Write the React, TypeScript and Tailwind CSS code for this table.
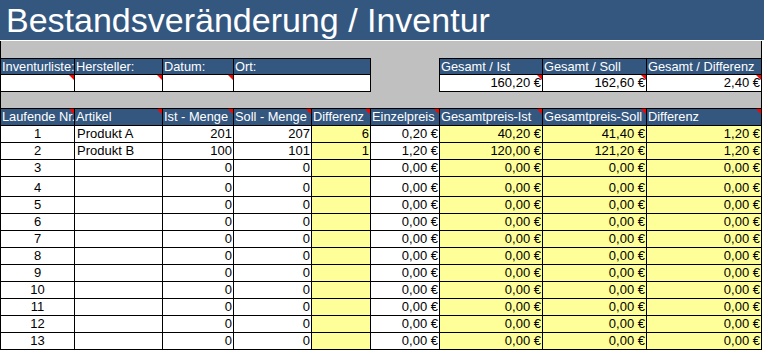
const FONT = "font-['Liberation_Sans',Arial,sans-serif]"

const Mark = () => (
  <span className="absolute right-0 top-0 h-[5px] w-[5px] bg-[#ff0000] [clip-path:polygon(0_0,100%_0,100%_100%)]" />
)

type Row = {
  n: number
  art: string
  ist: string
  soll: string
  diff: string
  ep: string
  gi: string
  gs: string
  gd: string
}

const rows: Row[] = [
  { n: 1, art: 'Produkt A', ist: '201', soll: '207', diff: '6', ep: '0,20 €', gi: '40,20 €', gs: '41,40 €', gd: '1,20 €' },
  { n: 2, art: 'Produkt B', ist: '100', soll: '101', diff: '1', ep: '1,20 €', gi: '120,00 €', gs: '121,20 €', gd: '1,20 €' },
  ...[3, 4, 5, 6, 7, 8, 9, 10, 11, 12, 13].map((n) => ({
    n,
    art: '',
    ist: '0',
    soll: '0',
    diff: '',
    ep: '0,00 €',
    gi: '0,00 €',
    gs: '0,00 €',
    gd: '0,00 €',
  })),
]

const headers = [
  'Laufende Nr.',
  'Artikel',
  'Ist - Menge',
  'Soll - Menge',
  'Differenz',
  'Einzelpreis',
  'Gesamtpreis-Ist',
  'Gesamtpreis-Soll',
  'Differenz',
]

const HeadCell = ({ text, mark = true }: { text: string; mark?: boolean }) => (
  <div className="relative flex h-[15px] items-end overflow-hidden whitespace-nowrap bg-[#34577f] pl-px text-[12.8px] leading-[15px] text-white">
    {text}
    {mark && <Mark />}
  </div>
)

const App = () => {
  return (
    <div className={`${FONT} w-[764px] h-[351px] overflow-hidden bg-white text-black`}>
      {/* Titel */}
      <div className="flex h-10 items-center bg-[#34577f] pl-[6px] text-[34px] leading-10 text-white">
        Bestandsveränderung / Inventur
      </div>
      <div className="h-px" />

      {/* Kopfbereich */}
      <div className="flex w-[762px] flex-col border-x border-black bg-[#c0c0c0] pt-[17px] pb-[16px]">
        <div className="flex">
          <div className="grid grid-cols-[73px_87px_70px_136px] gap-px bg-black py-px pr-px">
            <HeadCell text="Inventurliste:" mark={false} />
            <HeadCell text="Hersteller:" mark={false} />
            <HeadCell text="Datum:" mark={false} />
            <HeadCell text="Ort:" mark={false} />
            <div className="relative h-4 bg-white"><Mark /></div>
            <div className="relative h-4 bg-white"><Mark /></div>
            <div className="relative h-4 bg-white"><Mark /></div>
            <div className="h-4 bg-white" />
          </div>
          <div className="w-[68px]" />
          <div className="grid grid-cols-[102px_103px_114px] gap-px bg-black py-px pl-px">
            <HeadCell text="Gesamt / Ist" mark={false} />
            <HeadCell text="Gesamt / Soll" mark={false} />
            <HeadCell text="Gesamt / Differenz" mark={false} />
            {['160,20 €', '162,60 €', '2,40 €'].map((v) => (
              <div key={v} className="relative flex h-4 items-end justify-end bg-white pr-px text-[13px] leading-4">
                {v}
                <Mark />
              </div>
            ))}
          </div>
        </div>
      </div>

      {/* Tabelle */}
      <div className="grid w-[762px] grid-cols-[73px_87px_70px_77px_58px_68px_102px_103px_114px] gap-px bg-black p-px text-[13px]">
        {headers.map((h, i) => (
          <div
            key={i}
            className="relative flex h-4 items-end overflow-hidden whitespace-nowrap bg-[#34577f] pl-px text-[12.8px] leading-4 text-white"
          >
            {h}
            <Mark />
          </div>
        ))}
        {rows.map((r) => {
          const h = r.n === 4 ? 'h-[19px]' : 'h-4'
          return [
            <div key={`${r.n}a`} className={`${h} flex items-end justify-center bg-white leading-4`}>{r.n}</div>,
            <div key={`${r.n}b`} className={`${h} flex items-end bg-white pl-[2px] leading-4`}>{r.art}</div>,
            <div key={`${r.n}c`} className={`${h} flex items-end justify-end bg-white pr-px leading-4`}>{r.ist}</div>,
            <div key={`${r.n}d`} className={`${h} flex items-end justify-end bg-white pr-px leading-4`}>{r.soll}</div>,
            <div key={`${r.n}e`} className={`${h} flex items-end justify-end bg-[#ffff99] pr-px leading-4`}>{r.diff}</div>,
            <div key={`${r.n}f`} className={`${h} flex items-end justify-end bg-white pr-px leading-4`}>{r.ep}</div>,
            <div key={`${r.n}g`} className={`${h} flex items-end justify-end bg-[#ffff99] pr-px leading-4`}>{r.gi}</div>,
            <div key={`${r.n}h`} className={`${h} flex items-end justify-end bg-[#ffff99] pr-px leading-4`}>{r.gs}</div>,
            <div key={`${r.n}i`} className={`${h} flex items-end justify-end bg-[#ffff99] pr-px leading-4`}>{r.gd}</div>,
          ]
        })}
      </div>
    </div>
  )
}

export default App
